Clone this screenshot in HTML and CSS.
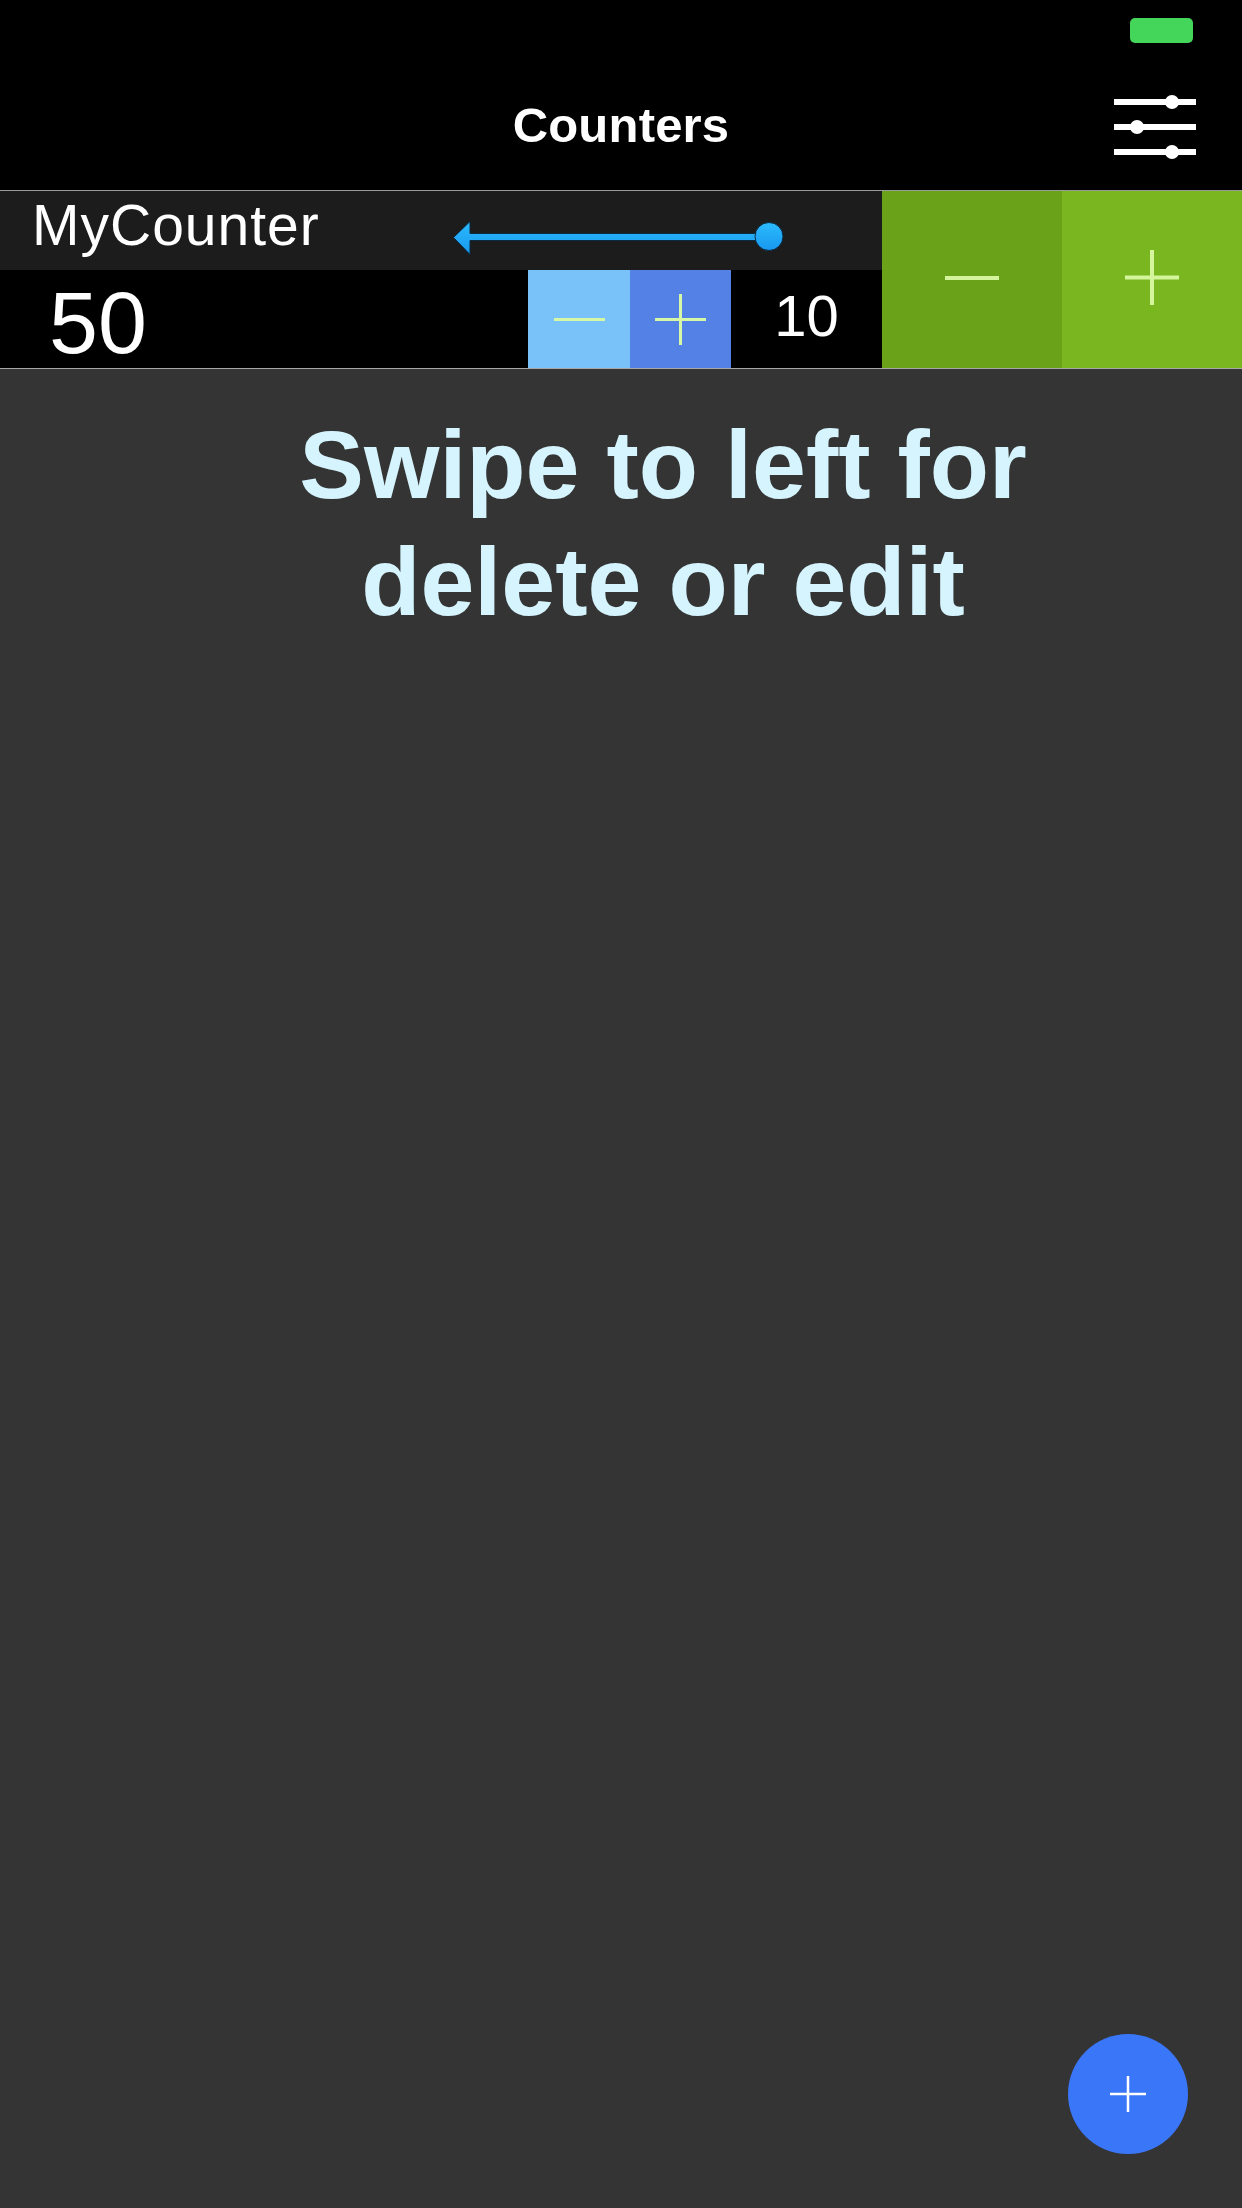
FILE: index.html
```html
<!DOCTYPE html>
<html>
<head>
<meta charset="utf-8">
<link rel="stylesheet" href="styles.css">
</head>
<body>
<div class="screen">
  <header class="header">
    <div class="status"><div class="battery"></div></div>
    <div class="nav">
      <div class="nav-side"></div>
      <div class="title">Counters</div>
      <div class="nav-side nav-right">
        <svg class="sliders" width="82" height="64" viewBox="0 0 82 64">
          <g stroke="#fff" stroke-width="6">
            <line x1="0" y1="7" x2="82" y2="7"/>
            <line x1="0" y1="32" x2="82" y2="32"/>
            <line x1="0" y1="57" x2="82" y2="57"/>
          </g>
          <g fill="#fff">
            <circle cx="58" cy="7" r="7"/>
            <circle cx="23" cy="32" r="7"/>
            <circle cx="58" cy="57" r="7"/>
          </g>
        </svg>
      </div>
    </div>
  </header>

  <section class="counter">
    <div class="counter-main">
      <div class="counter-top">
        <div class="name">MyCounter</div>
        <svg class="arrow" width="332" height="36" viewBox="0 0 332 36">
          <defs>
            <linearGradient id="ag" x1="0" y1="0" x2="0" y2="1">
              <stop offset="0" stop-color="#2cbafd"/>
              <stop offset="1" stop-color="#1898ef"/>
            </linearGradient>
          </defs>
          <path d="M0.5 17.5 L17 1.5 L17 13.5 L306 13.5 L306 20.5 L17 20.5 L17 34.5 Z" fill="url(#ag)" stroke="#0a2a40" stroke-width="1"/>
          <circle cx="316" cy="16.5" r="14" fill="url(#ag)" stroke="#0a2a40" stroke-width="1"/>
        </svg>
      </div>
      <div class="counter-bottom">
        <div class="value">50</div>
        <div class="step-btn step-minus">
          <svg width="51" height="51" viewBox="0 0 51 51"><line x1="0" y1="25.5" x2="51" y2="25.5" stroke="#d6f7a3" stroke-width="3"/></svg>
        </div>
        <div class="step-btn step-plus">
          <svg width="51" height="51" viewBox="0 0 51 51"><g stroke="#d6f7a3" stroke-width="3"><line x1="0" y1="25.5" x2="51" y2="25.5"/><line x1="25.5" y1="0" x2="25.5" y2="51"/></g></svg>
        </div>
        <div class="step">10</div>
      </div>
    </div>
    <div class="big-btn big-minus">
      <svg width="54" height="54" viewBox="0 0 54 54"><line x1="0" y1="27" x2="54" y2="27" stroke="#d4f59c" stroke-width="4"/></svg>
    </div>
    <div class="big-btn big-plus">
      <svg width="54" height="55" viewBox="0 0 54 55"><g stroke="#d4f59c" stroke-width="4"><line x1="0" y1="27.5" x2="54" y2="27.5"/><line x1="27" y1="0" x2="27" y2="55"/></g></svg>
    </div>
  </section>

  <p class="hint">Swipe to left for<br>delete or edit</p>

  <button class="fab" aria-label="Add">
    <svg width="36" height="36" viewBox="0 0 36 36"><g stroke="#fff" stroke-width="2.5"><line x1="0" y1="18" x2="36" y2="18"/><line x1="18" y1="0" x2="18" y2="36"/></g></svg>
  </button>
</div>
</body>
</html>
```

FILE: styles.css
```css
* { box-sizing: border-box; }

html, body {
  margin: 0;
  padding: 0;
  background: #343434;
}

body {
  font-family: "Liberation Sans", Arial, sans-serif;
  color: #fff;
}

.screen {
  position: relative;
  width: 1242px;
  height: 2208px;
  background: #343434;
  overflow: hidden;
}

.header {
  background: #000;
  border-bottom: 1px solid #9a9a9a;
}

.status {
  height: 58px;
  display: flex;
  justify-content: flex-end;
  padding: 18px 49px 0 0;
}

.battery {
  width: 63px;
  height: 25px;
  border-radius: 5px;
  background: #44d65a;
}

.nav {
  height: 132px;
  display: grid;
  grid-template-columns: 1fr auto 1fr;
  align-items: start;
}

.title {
  font-weight: bold;
  font-size: 49px;
  line-height: 49px;
  padding-top: 43px;
  letter-spacing: 0.2px;
}

.nav-right {
  display: flex;
  justify-content: flex-end;
  padding: 37px 46px 0 0;
}

.sliders { display: block; }

.counter {
  display: flex;
  height: 178px;
  border-bottom: 1px solid #a8a8a8;
}

.counter-main {
  width: 882px;
  display: flex;
  flex-direction: column;
}

.counter-top {
  height: 79px;
  background: #1c1c1c;
  display: flex;
  align-items: flex-start;
}

.name {
  width: 453px;
  padding-left: 32px;
  font-size: 57px;
  line-height: 69px;
  letter-spacing: 1px;
}

.arrow {
  display: block;
  margin-top: 29px;
}

.counter-bottom {
  height: 98px;
  background: #000;
  display: flex;
  align-items: flex-start;
}

.value {
  flex: 1;
  padding-left: 49px;
  padding-top: 4px;
  font-size: 88px;
  line-height: 98px;
}

.step-btn {
  height: 98px;
  display: flex;
  align-items: center;
  justify-content: center;
}

.step-btn svg { display: block; }

.step-minus {
  width: 102px;
  background: #78c2f9;
}

.step-plus {
  width: 101px;
  background: #5381e6;
}

.step {
  width: 151px;
  text-align: center;
  font-size: 58px;
  line-height: 92px;
}

.big-btn {
  width: 180px;
  display: flex;
  align-items: center;
  justify-content: center;
  padding-bottom: 4px;
}

.big-btn svg { display: block; }

.big-minus { background: #6aa319; }
.big-plus { background: #79b620; }

.hint {
  margin: 37px 0 0 0;
  padding-left: 84px;
  text-align: center;
  font-weight: bold;
  font-size: 97px;
  line-height: 117px;
  color: #d5f4fd;
}

.fab {
  position: absolute;
  right: 54px;
  bottom: 54px;
  width: 120px;
  height: 120px;
  border-radius: 50%;
  border: none;
  padding: 0;
  background: #3a76f8;
  display: flex;
  align-items: center;
  justify-content: center;
}

.fab svg { display: block; }
```
